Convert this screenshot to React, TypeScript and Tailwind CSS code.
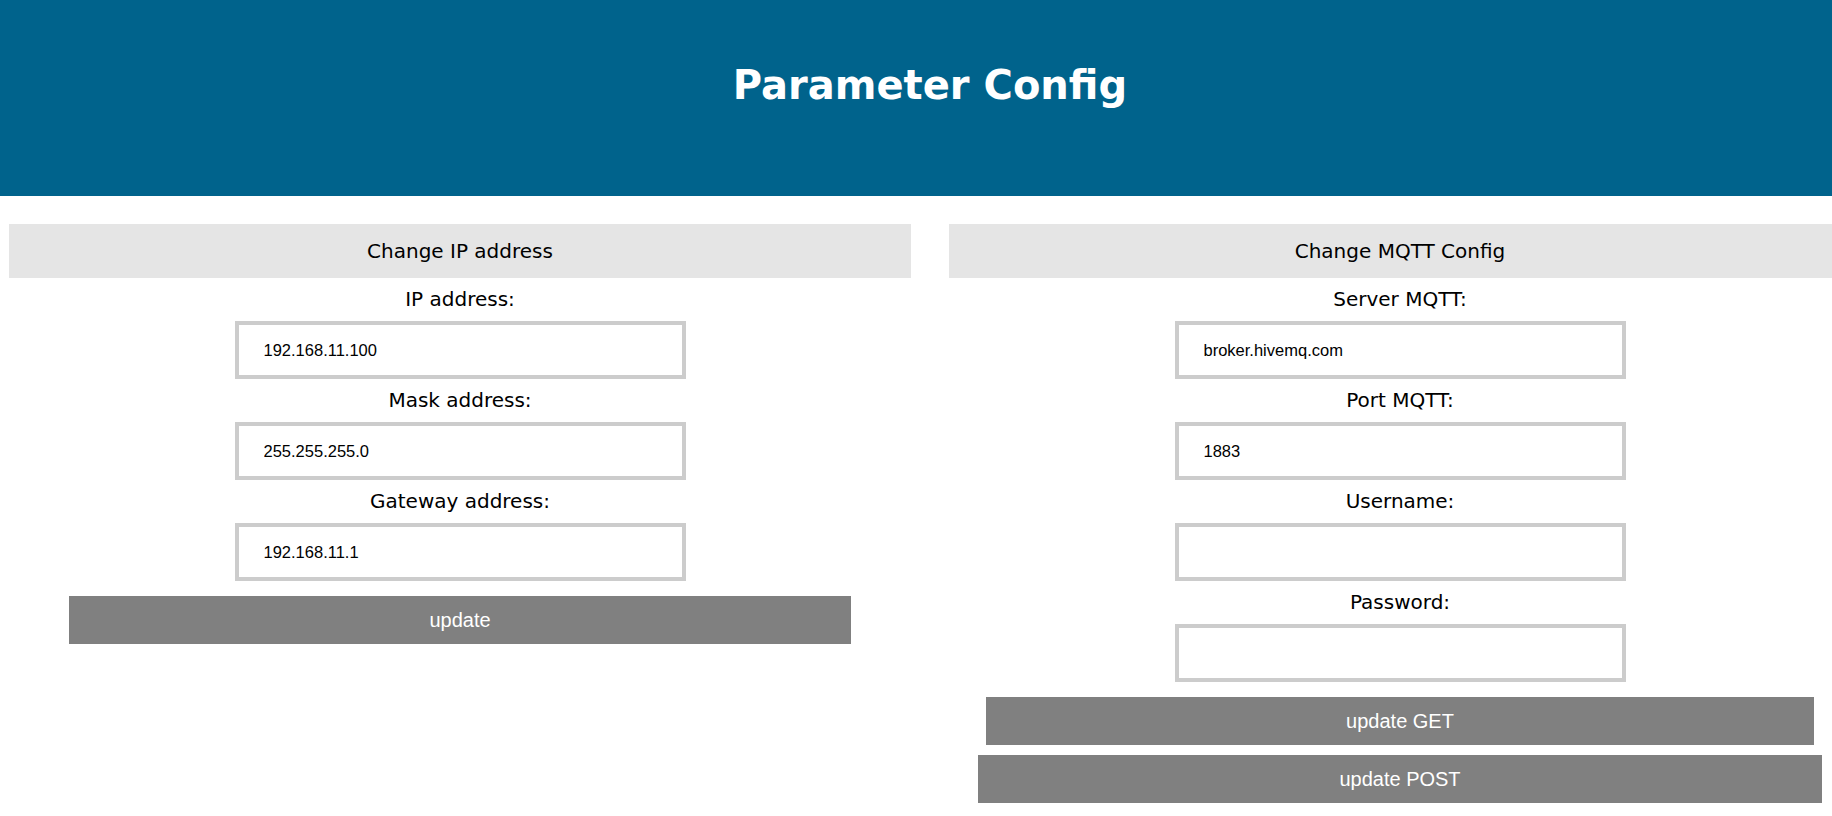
import { ReactNode } from 'react';

const sans = 'font-["DejaVu_Sans",Verdana,sans-serif]';
const arial = 'font-["Liberation_Sans",Arial,sans-serif]';

function Field({ label, value }: { label: string; value?: string }) {
  return (
    <>
      <label className={`${sans} mt-[9px] h-[24px] text-[20px] leading-[24px] text-black`}>{label}</label>
      <input
        type="text"
        defaultValue={value}
        className={`${arial} mt-[10px] h-[58px] w-[451px] border-4 border-[#cccccc] bg-white px-[25px] text-[16.5px] text-black outline-none`}
      />
    </>
  );
}

function Panel({ title, children }: { title: string; children: ReactNode }) {
  return (
    <div className="flex flex-col items-center">
      <div className={`${sans} flex h-[54px] w-[98%] items-center justify-center bg-[#e5e5e5] text-[20px] text-black`}>
        {title}
      </div>
      {children}
    </div>
  );
}

function UpdateButton({ label, width, className = '' }: { label: string; width: string; className?: string }) {
  return (
    <button className={`${arial} ${width} h-[48px] bg-[#808080] text-[20px] text-white ${className}`}>
      {label}
    </button>
  );
}

export default function App() {
  return (
    <div className="h-[816px] w-screen overflow-hidden bg-white">
      <div className="w-[1860px]">
        <header className="flex h-[196px] w-full justify-center bg-[#00638c] pt-[58px]">
          <h1 className={`${sans} text-[40px] font-bold leading-[54px] text-white`}>Parameter Config</h1>
        </header>

        <div className="mt-[28px] grid grid-cols-2 gap-5">
          {/* IP settings */}
          <Panel title="Change IP address">
            <Field label="IP address:" value="192.168.11.100" />
            <Field label="Mask address:" value="255.255.255.0" />
            <Field label="Gateway address:" value="192.168.11.1" />
            <UpdateButton label="update" width="w-[782px]" className="mt-[15px]" />
          </Panel>

          {/* MQTT settings */}
          <Panel title="Change MQTT Config">
            <Field label="Server MQTT:" value="broker.hivemq.com" />
            <Field label="Port MQTT:" value="1883" />
            <Field label="Username:" />
            <Field label="Password:" />
            <UpdateButton label="update GET" width="w-[828px]" className="mt-[15px]" />
            <UpdateButton label="update POST" width="w-[844px]" className="mt-[10px]" />
          </Panel>
        </div>
      </div>
    </div>
  );
}
